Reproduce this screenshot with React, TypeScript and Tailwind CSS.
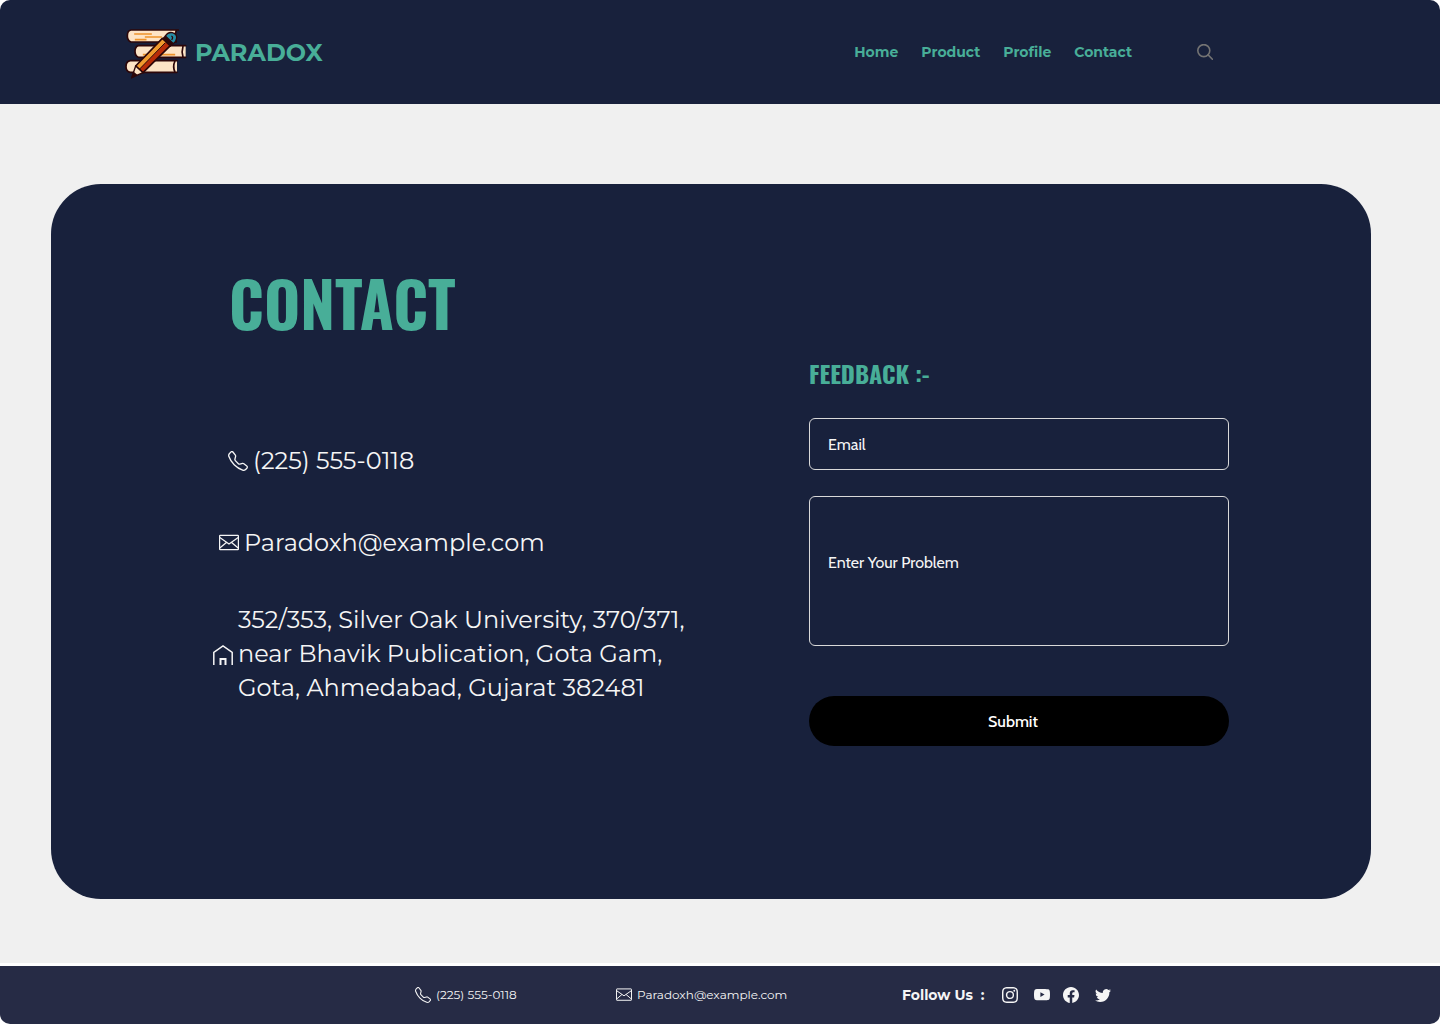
import { BsFacebook, BsInstagram, BsTelephone, BsTwitter, BsYoutube } from "react-icons/bs";

function BooksLogo() {
  return (
    <svg viewBox="0 0 216 186" className="h-[62px] w-[72px] shrink-0" aria-hidden="true">
      <g stroke="#2c0709" strokeWidth="5" strokeLinecap="round" strokeLinejoin="round">
        <path d="M178 24H36Q25 26 25 42Q25 56 36 60H172Q165 42 172 25" fill="#fde4c6" />
        <path d="M200 71H58Q48 74 48 88Q48 102 58 106H200M192 73Q187 89 192 105" fill="#fde4c6" />
        <path d="M174 116H34Q21 118 21 134Q21 148 34 151H174M168 117Q160 134 168 150" fill="#fde4c6" />
      </g>
      <g stroke="#ed922b" strokeWidth="5" strokeLinecap="square">
        <path d="M48 36H96M80 45H126M50 53H80M106 87H130M74 98H98M122 98H166" />
      </g>
      <path d="M50 132L130 49L154 71L72 152Z" fill="#b82c08" />
      <path d="M50 132L130 49L142 60L61 142Z" fill="#f09a2e" />
      <path d="M50 132L130 49L154 71L72 152Z" fill="none" stroke="#2c0709" strokeWidth="5" strokeLinejoin="round" />
      <path d="M61 142L139 62" stroke="#2c0709" strokeWidth="3" />
      <path d="M130 49L139 40L165 64L154 75Z" fill="#2c0709" />
      <path d="M139 42Q147 29 160 32Q174 36 173 48Q172 58 163 65Z" fill="#268da5" stroke="#2c0709" strokeWidth="4" />
      <path d="M157 42Q164 45 158 54" fill="none" stroke="#2c0709" strokeWidth="4" />
      <path d="M50 132L38 167L72 152Z" fill="#fde4c6" stroke="#2c0709" strokeWidth="4" strokeLinejoin="round" />
      <path d="M44 149L36 170L57 160Z" fill="#2c0709" />
    </svg>
  );
}

function SearchIcon() {
  return (
    <svg viewBox="0 0 16 16" className="size-4" fill="none" stroke="currentColor" strokeWidth="1.6" strokeLinecap="round" aria-hidden="true">
      <circle cx="6.8" cy="6.6" r="6" />
      <path d="M11.1 10.9l4.3 4.3" />
    </svg>
  );
}

function MailIcon({ className }: { className: string }) {
  return (
    <svg viewBox="0 0 20 20" className={className} fill="none" stroke="currentColor" strokeWidth="1.25" strokeLinejoin="round" aria-hidden="true">
      <rect x="0.6" y="2.4" width="18.8" height="14.2" rx="0.6" />
      <path d="M0.8 4.6L10 11L19.2 4.6M0.8 15L7.4 9.4M19.2 15L12.6 9.4" />
    </svg>
  );
}

function HomeIcon() {
  return (
    <svg viewBox="0 0 20 20" className="mt-0.5 size-5 shrink-0" fill="none" stroke="currentColor" strokeWidth="1.5" aria-hidden="true">
      <path d="M0.8 20V7.5L10 1l9.2 6.5V20" />
      <path d="M7.5 20v-6h5v6" strokeWidth="2" />
    </svg>
  );
}

const links = ["Home", "Product", "Profile", "Contact"];

const socials = [
  { label: "Instagram", Icon: BsInstagram, gap: "" },
  { label: "YouTube", Icon: BsYoutube, gap: "ml-4" },
  { label: "Facebook", Icon: BsFacebook, gap: "ml-[13px]" },
  { label: "Twitter", Icon: BsTwitter, gap: "ml-4" },
];

export default function App() {
  return (
    <div className="flex min-h-screen flex-col overflow-hidden rounded-[10px] bg-[#f0f0f0] font-[Montserrat,Inter,sans-serif]">
      <header className="flex h-[104px] items-center justify-between bg-[#18213c] pr-[227px] pl-[119px] text-[#48ae98]">
        <a href="#" className="flex items-center gap-1 pt-0.5 text-[24px] font-bold">
          <BooksLogo />
          PARADOX
        </a>
        <div className="flex items-center gap-[65px]">
          <nav className="flex gap-[23px] text-[14px] font-bold">
            {links.map((link) => (
              <a key={link} href="#">
                {link}
              </a>
            ))}
          </nav>
          <button type="button" aria-label="Search" className="text-[#737373]">
            <SearchIcon />
          </button>
        </div>
      </header>

      <main className="flex-1 pt-20 pr-[69px] pb-16 pl-[51px]">
        <div className="grid grid-cols-[minmax(0,1fr)_420px] gap-x-16 rounded-[50px] bg-[#18213c] pt-[82px] pr-[142px] pb-[153px] pl-[162px] text-[#f5f5f5]">
          <section>
            <h1 className="ml-4 font-[Oswald,'Liberation_Sans_Narrow',sans-serif] text-[62px] leading-[72px] font-bold text-[#48ae98]">
              CONTACT
            </h1>
            <address className="text-[24px] leading-[34px] not-italic">
              <a href="tel:2255550118" className="mt-[106px] ml-[15px] flex items-center gap-[5px]">
                <BsTelephone className="size-5 shrink-0" />
                (225) 555-0118
              </a>
              <a href="mailto:Paradoxh@example.com" className="mt-12 ml-[6px] flex items-center gap-[5px]">
                <MailIcon className="size-5 shrink-0" />
                Paradoxh@example.com
              </a>
              <p className="mt-[43px] flex items-center gap-[5px]">
                <HomeIcon />
                <span>
                  352/353, Silver Oak University, 370/371,
                  <br />
                  near Bhavik Publication, Gota Gam,
                  <br />
                  Gota, Ahmedabad, Gujarat 382481
                </span>
              </p>
            </address>
          </section>

          <form className="pt-[89px] font-[Cabin,Lato,sans-serif] text-base" onSubmit={(e) => e.preventDefault()}>
            <h2 className="font-[Oswald,'Liberation_Sans_Narrow',sans-serif] text-[24px] leading-9 font-bold text-[#48ae98]">
              FEEDBACK :-
            </h2>
            <input
              type="email"
              aria-label="Email"
              placeholder="Email"
              className="mt-[27px] block h-[52px] w-full rounded-md border border-[#d9d9d9] px-[18px] placeholder:text-[#f5f5f5] placeholder:opacity-100"
            />
            <textarea
              aria-label="Enter Your Problem"
              placeholder="Enter Your Problem"
              className="mt-[26px] block h-[150px] w-full resize-none rounded-md border border-[#d9d9d9] px-[18px] py-[54px] placeholder:text-[#f5f5f5] placeholder:opacity-100"
            />
            <button type="submit" className="mt-[50px] h-[50px] w-full rounded-full bg-black pt-0.5 pr-3 font-medium text-white">
              Submit
            </button>
          </form>
        </div>
      </main>

      <footer className="grid h-[61px] grid-cols-[415fr_201fr_286fr_538fr] items-center border-t-[3px] border-white bg-[#262b45] text-[12px] text-[#f5f5f5]">
        <a href="tel:2255550118" className="col-start-2 flex items-center gap-[5px]">
          <BsTelephone className="size-4 shrink-0" />
          (225) 555-0118
        </a>
        <a href="mailto:Paradoxh@example.com" className="flex items-center gap-[5px]">
          <MailIcon className="size-4 shrink-0" />
          Paradoxh@example.com
        </a>
        <div className="flex items-center">
          <span className="mr-[18px] text-[14px] font-bold whitespace-pre">Follow Us  :</span>
          {socials.map(({ label, Icon, gap }) => (
            <a key={label} href="#" aria-label={label} className={gap}>
              <Icon className="size-4" />
            </a>
          ))}
        </div>
      </footer>
    </div>
  );
}
